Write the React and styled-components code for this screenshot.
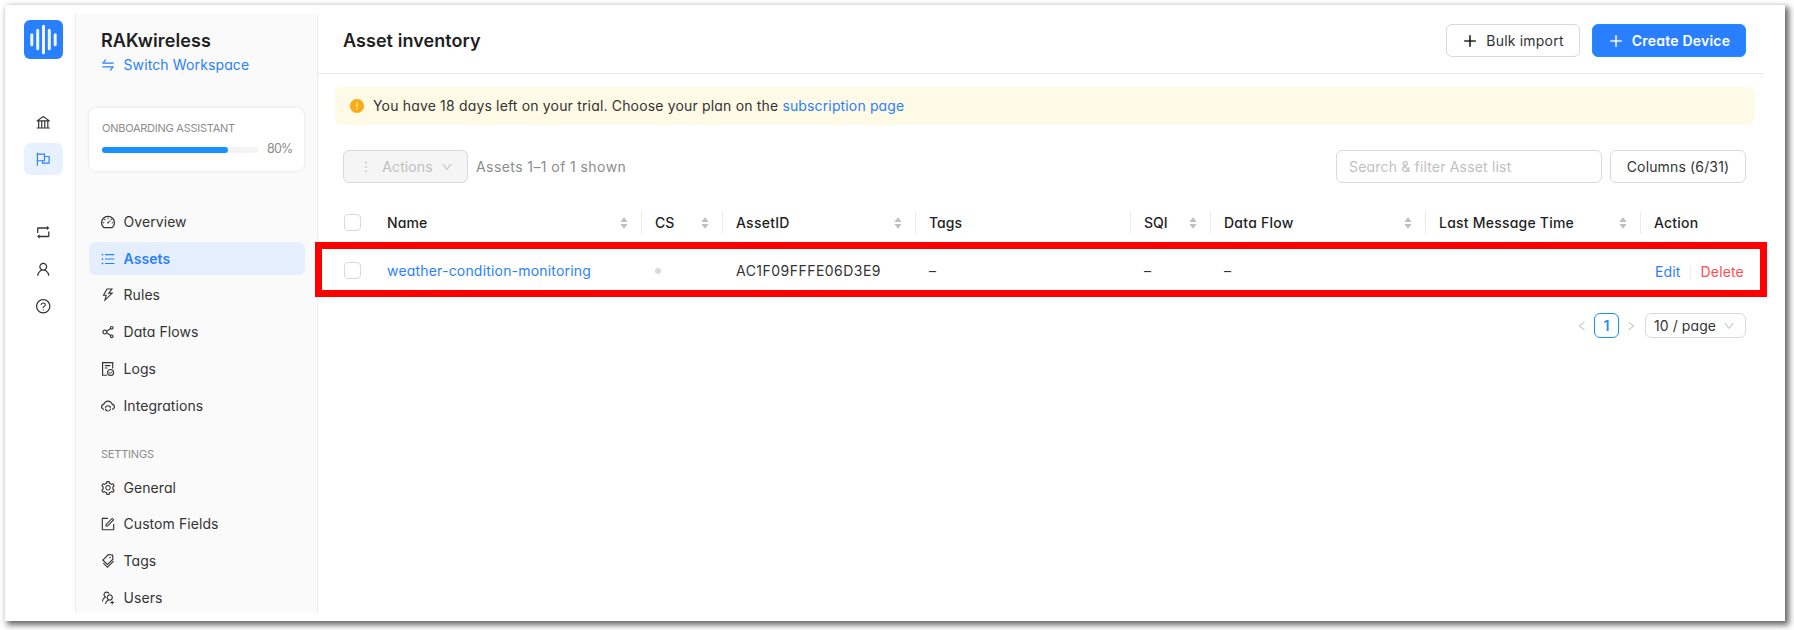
import React from "react";
import styled, { createGlobalStyle, css } from "styled-components";
import {
  AiOutlineBank, AiOutlineFlag, AiOutlineRetweet, AiOutlineUser, AiOutlineQuestionCircle,
  AiOutlineDashboard, AiOutlineUnorderedList, AiOutlineThunderbolt, AiOutlineShareAlt,
  AiOutlineCloudSync, AiOutlineSetting, AiOutlineForm, AiOutlineTags,
  AiOutlineUsergroupAdd, AiOutlineSwap, AiOutlinePlus, AiOutlineMore, AiOutlineDown,
  AiFillExclamationCircle, AiOutlineLeft, AiOutlineRight,
} from "react-icons/ai";

const blue = "#2a7fff";

const GlobalStyle = createGlobalStyle`
  *, *::before, *::after { box-sizing: border-box; }
  html, body { margin: 0; background: #fff; overflow: hidden; }
  body {
    font-family: Inter, "Liberation Sans", sans-serif;
    font-feature-settings: "cv11";
    font-size: 14px;
    line-height: 1;
    color: #333;
  }
  svg { display: block; flex: none; }
`;

const Page = styled.div`
  width: 1794px;
  height: 630px;
  padding: 5px 9px 9px 5px;
`;
const Window = styled.div`
  height: 616px;
  display: flex;
  padding: 9px 21px 8px 0;
  background: #fff;
  box-shadow: 3px 3px 6px 1px rgba(0, 0, 0, 0.6);
`;
const Rail = styled.nav`
  width: 70px;
  padding: 6px 0 0 19px;
  display: flex;
  flex-direction: column;
  flex: none;
`;
const Logo = styled.div`
  width: 39px;
  height: 39px;
  border-radius: 6px;
  background: ${blue};
  margin-bottom: 47px;
`;
const RailItem = styled.div`
  width: 39px;
  height: 32px;
  margin-bottom: ${(p) => p.$after ?? 5}px;
  border-radius: 7px;
  display: flex;
  align-items: center;
  justify-content: center;
  font-size: 16.5px;
  color: ${(p) => (p.$active ? blue : "#333")};
  background: ${(p) => (p.$active ? "#e8f1ff" : "transparent")};
`;
const Sidebar = styled.aside`
  width: 243px;
  height: 599px;
  flex: none;
  padding: 0 12px 0 13px;
  overflow: hidden;
  background: #fafafa;
  border: solid #ececec;
  border-width: 0 1px;
`;
const Text = styled.span`
  white-space: nowrap;
  font-size: ${(p) => p.$size ?? 14}px;
  font-weight: ${(p) => p.$weight ?? 400};
  letter-spacing: ${(p) => p.$track ?? 0}px;
  color: ${(p) => p.$color ?? "inherit"};
`;
const Workspace = styled.div`
  height: 94px;
  padding: 18px 0 0 12px;
`;
const WorkspaceName = styled.div`
  height: 18px;
  display: flex;
  align-items: center;
`;
const SwitchLink = styled.a`
  display: flex;
  align-items: center;
  height: 16px;
  margin: 7px 0 0 -1px;
  gap: 7.5px;
  color: ${blue};
`;
const OnboardingCard = styled.div`
  width: 215px;
  height: 63px;
  padding: 15px 12px 0 13px;
  border-radius: 7px;
  background: #fff;
  box-shadow: 0 0 3px rgba(0, 0, 0, 0.12);
  display: flex;
  flex-direction: column;
  gap: 9px;
`;
const ProgressRow = styled.div`
  display: flex;
  align-items: center;
  gap: 9px;
`;
const Track = styled.div`
  width: 156px;
  height: 6px;
  margin-top: 2px;
  flex: none;
  border-radius: 3px;
  background: #f3f3f3;
`;
const Fill = styled.div`
  width: 126px;
  height: 6px;
  border-radius: 3px;
  background: #1890ff;
`;
const Menu = styled.ul`
  list-style: none;
  margin: ${(p) => p.$top}px 0 0;
  padding: 0;
`;
const MenuItem = styled.li`
  height: 32.8px;
  margin-bottom: 4px;
  padding-left: 11px;
  display: flex;
  align-items: center;
  gap: 7.5px;
  border-radius: 7px;
  color: ${(p) => (p.$active ? blue : "#333")};
  background: ${(p) => (p.$active ? "#e4eefc" : "transparent")};
`;
const SectionTitle = styled.div`
  padding: 20px 0 0 12px;
  height: 43px;
`;
const Main = styled.main`
  flex: 1;
  min-width: 0;
`;
const Header = styled.header`
  height: 60px;
  padding: 0 18px 6px 25px;
  display: flex;
  align-items: center;
  border-bottom: 1px solid #e8e8e8;
`;
const Spacer = styled.div`
  flex: 1;
`;
const Button = styled.button`
  width: ${(p) => p.$w}px;
  height: 33px;
  padding: 0;
  margin: 0 0 0 ${(p) => p.$left ?? 0}px;
  font: inherit;
  color: #333;
  display: flex;
  align-items: center;
  justify-content: center;
  gap: 8px;
  border: 1px solid #d9d9d9;
  border-radius: 6px;
  background: #fff;
  ${(p) => p.$primary && css`color: #fff; background: ${blue}; border-color: #1890ff;`}
  ${(p) => p.$disabled && css`color: #bfbfbf; background: #f5f5f5;`}
`;
const PlusIcon = styled(AiOutlinePlus)`
  color: ${(p) => p.color ?? "#111"};
  stroke: currentColor;
  stroke-width: 24;
`;
const Content = styled.div`
  padding: 13px 10px 0 17px;
`;
const Alert = styled.div`
  height: 38px;
  padding-left: 14px;
  display: flex;
  align-items: center;
  gap: 8px;
  border-radius: 6px;
  background: #fffae6;
`;
const Toolbar = styled.div`
  display: flex;
  align-items: center;
  margin: 25px 8px 16px 8px;
`;
const Count = styled.div`
  margin-left: 8px;
  color: #8c8c8c;
`;
const Search = styled.div`
  width: 266px;
  height: 33px;
  padding-left: 12px;
  display: flex;
  align-items: center;
  border: 1px solid #d9d9d9;
  border-radius: 6px;
  color: #bfbfbf;
`;
const Row = styled.div`
  position: relative;
  height: 48px;
  display: grid;
  grid-template-columns: 39px 268px 81px 193px 215px 80px 215px 215px 113px;
  align-items: center;
`;
const Cell = styled.div`
  height: 22px;
  display: flex;
  align-items: center;
  justify-content: space-between;
  padding: 0 13px 0 ${(p) => p.$left ?? 13}px;
  border-right: 1px solid ${(p) => (p.$line ? "#ececec" : "transparent")};
`;
const Checkbox = styled.div`
  width: 17px;
  height: 17px;
  flex: none;
  border: 1px solid #d9d9d9;
  border-radius: 4px;
  background: #fff;
  margin-top: -1px;
`;
const Dot = styled.i`
  width: 6px;
  height: 6px;
  border-radius: 50%;
  background: #d9d9d9;
`;
const RowActions = styled.div`
  display: flex;
  align-items: center;
  margin: 2px 0 0 1px;
`;
const Divider = styled.i`
  width: 1px;
  height: 13px;
  margin: 0 10px 0 9px;
  background: #ececec;
`;
const Highlight = styled.div`
  position: absolute;
  left: -20px;
  right: -13px;
  top: -5px;
  bottom: -2px;
  border: 7px solid #f00;
`;
const Pagination = styled.div`
  margin: 18px 8px 0 0;
  height: 25px;
  display: flex;
  justify-content: flex-end;
  align-items: center;
  color: #bfbfbf;
`;
const PageNumber = styled.div`
  width: 25px;
  height: 25px;
  margin: 0 6px;
  display: flex;
  align-items: center;
  justify-content: center;
  border: 1px solid #1890ff;
  border-radius: 6px;
  color: #1890ff;
`;
const PageSize = styled.div`
  width: 101px;
  height: 25px;
  margin-left: 8px;
  padding: 0 10px 0 8px;
  display: flex;
  align-items: center;
  justify-content: space-between;
  border: 1px solid #d9d9d9;
  border-radius: 6px;
`;

const Sorter = () => (
  <svg width="8" height="12" viewBox="0 0 8 12" fill="#bfbfbf">
    <path d="M4 0.3 7.6 5H.4zM.4 7h7.2L4 11.7z" />
  </svg>
);

const LogsIcon = ({ size }) => (
  <svg width={size} height={size} viewBox="0 0 16 16" fill="none" stroke="currentColor" strokeWidth="1.15">
    <path d="M7 14.2H2.6V1.6H12.7V7.4M4.8 4.6h5.6M4.8 7h2.6" />
    <circle cx="10.6" cy="11.5" r="3" />
    <path d="M9.2 11.5l1.1 1.1 1.8-2.2" strokeWidth="1" />
  </svg>
);

const primaryMenu = [
  ["Overview", AiOutlineDashboard],
  ["Assets", AiOutlineUnorderedList],
  ["Rules", AiOutlineThunderbolt],
  ["Data Flows", AiOutlineShareAlt],
  ["Logs", LogsIcon],
  ["Integrations", AiOutlineCloudSync],
];
const settingsMenu = [
  ["General", AiOutlineSetting],
  ["Custom Fields", AiOutlineForm],
  ["Tags", AiOutlineTags],
  ["Users", AiOutlineUsergroupAdd],
];
const columns = [
  { label: "Name", sortable: true, track: 0.1 },
  { label: "CS", sortable: true },
  { label: "AssetID", sortable: true, track: 0.25 },
  { label: "Tags" },
  { label: "SQI", sortable: true },
  { label: "Data Flow", sortable: true, track: 0.25 },
  { label: "Last Message Time", sortable: true, track: 0.22 },
  { label: "Action", track: 0.2 },
];

const MenuList = ({ items, top }) => (
  <Menu $top={top}>
    {items.map(([label, Icon]) => (
      <MenuItem key={label} $active={label === "Assets"}>
        <Icon size={16} />
        <Text $weight={label === "Assets" ? 600 : 400} $track={0.07}>{label}</Text>
      </MenuItem>
    ))}
  </Menu>
);

export default function App() {
  return (
    <Page>
      <GlobalStyle />
      <Window>
        <Rail>
          <Logo>
            <svg width="39" height="39" viewBox="0 0 39 39" stroke="#eef5ff" strokeWidth="3" strokeLinecap="round">
              <path d="M7.8 14.8v10M13.7 10.2v18.6M19.5 6.2v26.6M25.3 10.2v18.6M31.2 14.8v10" />
            </svg>
          </Logo>
          <RailItem><AiOutlineBank /></RailItem>
          <RailItem $active $after={41}><AiOutlineFlag /></RailItem>
          <RailItem><AiOutlineRetweet /></RailItem>
          <RailItem><AiOutlineUser /></RailItem>
          <RailItem><AiOutlineQuestionCircle /></RailItem>
        </Rail>
        <Sidebar>
          <Workspace>
            <WorkspaceName><Text $size={18} $weight={600} $track={0.12} $color="#1f1f1f">RAKwireless</Text></WorkspaceName>
            <SwitchLink><AiOutlineSwap size={16} /><Text $track={0.12}>Switch Workspace</Text></SwitchLink>
          </Workspace>
          <OnboardingCard>
            <Text $size={11} $track={-0.25} $color="#8c8c8c">ONBOARDING ASSISTANT</Text>
            <ProgressRow>
              <Track><Fill /></Track>
              <Text $size={12.5} $track={-0.8} $color="#8c8c8c">80%</Text>
            </ProgressRow>
          </OnboardingCard>
          <MenuList items={primaryMenu} top={34.4} />
          <SectionTitle><Text $size={11} $track={-0.2} $color="#8c8c8c">SETTINGS</Text></SectionTitle>
          <MenuList items={settingsMenu} top={2} />
        </Sidebar>
        <Main>
          <Header>
            <Text $size={18} $weight={600} $track={0.06} $color="#1f1f1f">Asset inventory</Text>
            <Spacer />
            <Button $w={134}><PlusIcon size={16} /><Text $track={0.2}>Bulk import</Text></Button>
            <Button $w={154} $left={12} $primary><PlusIcon size={16} color="#fff" /><Text $weight={600} $track={0.22}>Create Device</Text></Button>
          </Header>
          <Content>
            <Alert>
              <AiFillExclamationCircle size={16} color="#faad14" />
              <Text $track={0.17}>You have 18 days left on your trial. Choose your plan on the <Text $track={0.14} $color={blue}>subscription page</Text></Text>
            </Alert>
            <Toolbar>
              <Button $w={125} $disabled><AiOutlineMore size={16} /><Text $track={0.1}>Actions</Text><AiOutlineDown size={12} /></Button>
              <Count><Text $track={0.42}>Assets 1–1 of 1 shown</Text></Count>
              <Spacer />
              <Search><Text $track={0.18}>Search &amp; filter Asset list</Text></Search>
              <Button $w={136} $left={8}><Text $track={0.15}>Columns (6/31)</Text></Button>
            </Toolbar>
            <Row>
              <Cell $left={9}><Checkbox /></Cell>
              {columns.map(({ label, sortable, track }) => (
                <Cell key={label} $line={label !== "Action"}>
                  <Text $weight={500} $track={track} $color="#1f1f1f">{label}</Text>
                  {sortable && <Sorter />}
                </Cell>
              ))}
            </Row>
            <Row>
              <Cell $left={9}><Checkbox /></Cell>
              <Cell><Text $track={0.19} $color={blue}>weather-condition-monitoring</Text></Cell>
              <Cell><Dot /></Cell>
              <Cell><Text $track={0.47}>AC1F09FFFE06D3E9</Text></Cell>
              <Cell><Text>–</Text></Cell>
              <Cell><Text>–</Text></Cell>
              <Cell><Text>–</Text></Cell>
              <Cell />
              <Cell>
                <RowActions>
                  <Text $track={0.15} $color={blue}>Edit</Text><Divider /><Text $track={0.15} $color="#ff4d4f">Delete</Text>
                </RowActions>
              </Cell>
              <Highlight />
            </Row>
            <Pagination>
              <AiOutlineLeft size={12} />
              <PageNumber><Text $weight={600}>1</Text></PageNumber>
              <AiOutlineRight size={12} />
              <PageSize><Text $track={0.08} $color="#333">10 / page</Text><AiOutlineDown size={12} /></PageSize>
            </Pagination>
          </Content>
        </Main>
      </Window>
    </Page>
  );
}
